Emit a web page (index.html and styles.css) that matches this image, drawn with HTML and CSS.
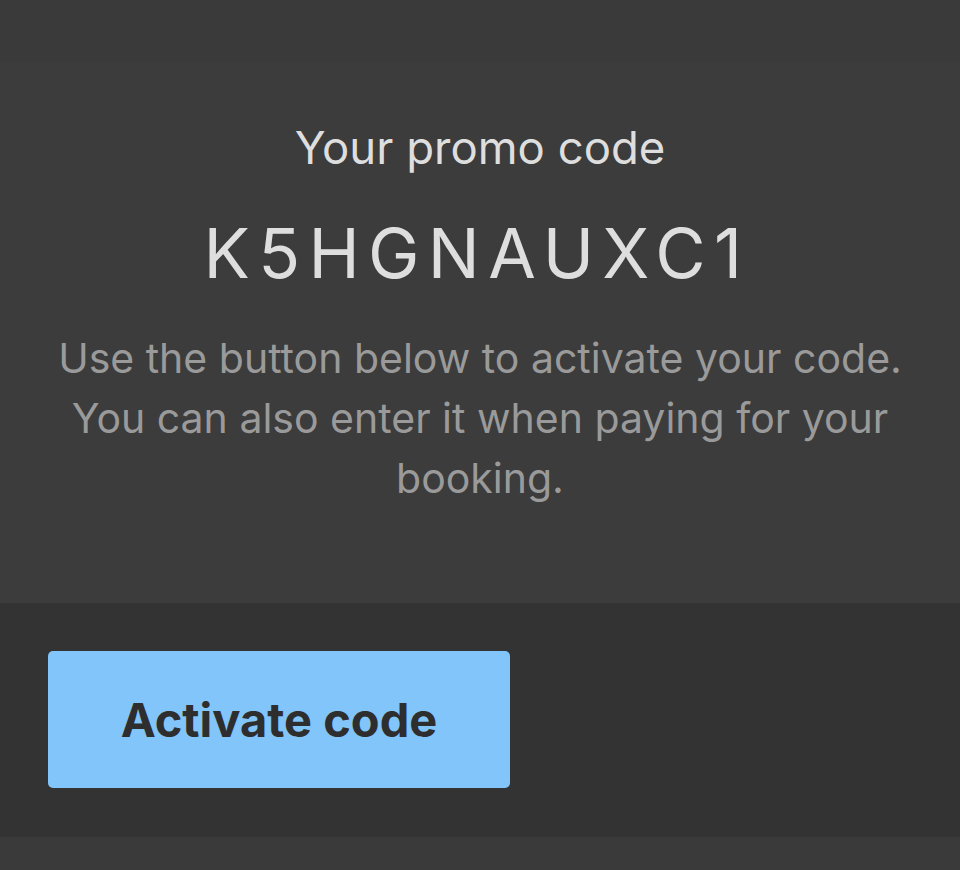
FILE: index.html
```html
<!DOCTYPE html>
<html lang="en">
<head>
<meta charset="utf-8">
<title>Promo code</title>
<link rel="stylesheet" href="styles.css">
</head>
<body>
<div class="page">
  <div class="top-spacer"></div>
  <section class="card">
    <h1 class="title">Your promo code</h1>
    <div class="code">K5HGNAUXC1</div>
    <p class="desc">Use the button below to activate your code. You can also enter it when paying for your booking.</p>
  </section>
  <section class="actions">
    <button class="btn">Activate code</button>
  </section>
  <div class="bottom"></div>
</div>
</body>
</html>
```
FILE: styles.css
```css
html, body {
  margin: 0;
  padding: 0;
  background: #3a3a3a;
  font-family: Inter, "Noto Sans", sans-serif;
}
.page {
  display: flex;
  flex-direction: column;
  width: 960px;
  height: 870px;
}
.top-spacer {
  height: 62px;
  background: #3a3a3a;
}
.card {
  background: #3c3c3c;
  height: 541px;
  box-sizing: border-box;
  padding: 56px 40px 0;
  display: flex;
  flex-direction: column;
  align-items: center;
  text-align: center;
}
.title {
  margin: 0;
  font-size: 45.5px;
  font-weight: 400;
  line-height: 60px;
  color: #dedede;
}
.code {
  margin-top: 35px;
  font-size: 69px;
  line-height: 80px;
  letter-spacing: 8.3px;
  text-indent: -6px;
  color: #dedede;
}
.desc {
  margin: 35px 0 0;
  font-size: 41px;
  line-height: 60px;
  color: #9a9a9a;
}
.actions {
  background: #333333;
  height: 234px;
  box-sizing: border-box;
  padding: 48px 48px 0;
}
.btn {
  display: block;
  width: 462px;
  height: 137px;
  border: none;
  border-radius: 5px;
  background: #82c5fa;
  color: #2e2e2e;
  font-family: Inter, "Noto Sans", sans-serif;
  font-size: 47px;
  font-weight: 700;
  padding: 0;
}
.bottom {
  flex: 1;
  background: #3a3a3a;
}
```
